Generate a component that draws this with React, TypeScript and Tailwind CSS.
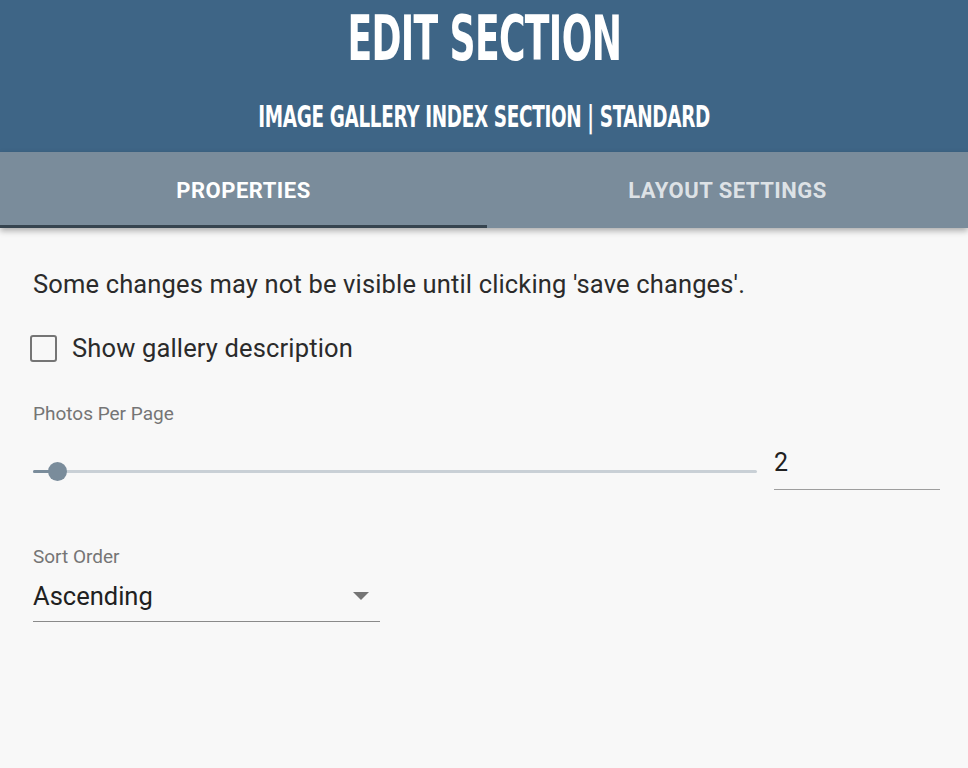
import { useState } from "react";

const condensed = { fontFamily: "'DejaVu Sans Condensed', 'DejaVu Sans', sans-serif" };

export default function App() {
  const [tab, setTab] = useState(0);
  const [checked, setChecked] = useState(false);
  const [perPage, setPerPage] = useState(2);
  const pct = ((perPage - 1) / 29) * 100;

  return (
    <div className="min-h-[768px] w-full bg-[#f8f8f8]" style={{ fontFamily: "Roboto, 'Liberation Sans', sans-serif" }}>
      {/* Header */}
      <div className="flex h-[152px] flex-col items-center bg-[#3e6586] text-white">
        <h1 className="mt-[5px] text-[62px] font-bold leading-[68px] tracking-[-1px] scale-x-[0.648]" style={condensed}>
          EDIT SECTION
        </h1>
        <h2 className="mt-[27px] text-[30px] font-bold leading-[34px] tracking-[-0.5px] scale-x-[0.682]" style={condensed}>
          IMAGE GALLERY INDEX SECTION | STANDARD
        </h2>
      </div>

      {/* Tabs */}
      <div className="relative flex h-[76px] bg-[#7a8c9b] shadow-[0_3px_6px_rgba(0,0,0,0.3)]">
        {["PROPERTIES", "LAYOUT SETTINGS"].map((t, i) => (
          <button
            key={t}
            onClick={() => setTab(i)}
            className={`relative flex items-center justify-center text-[22px] font-bold tracking-[0.5px] ${
              i === 0 ? "w-[487px]" : "flex-1"
            } ${tab === i ? "text-white" : "text-white/75"}`}
          >
            {t}
            {tab === i && <span className="absolute bottom-0 left-0 h-[3px] w-full bg-[#36444f]" />}
          </button>
        ))}
      </div>

      {/* Content */}
      <div className="pl-[33px] pr-[28px] pt-[41px] text-[#2b2b2b]">
        <p className="text-[25.5px] leading-[30px] tracking-[0.15px]">
          Some changes may not be visible until clicking 'save changes'.
        </p>

        <label className="mt-[34px] flex h-[30px] cursor-pointer items-center gap-[15px]">
          <span
            onClick={() => setChecked(!checked)}
            className={`-ml-[3px] flex h-[27px] w-[27px] items-center justify-center rounded-[3px] border-2 ${
              checked ? "border-[#7a8c9b] bg-[#7a8c9b]" : "border-[#757575]"
            }`}
          >
            {checked && (
              <svg viewBox="0 0 24 24" className="h-5 w-5" fill="none" stroke="white" strokeWidth="3">
                <path d="M5 12l5 5L20 7" />
              </svg>
            )}
          </span>
          <span className="text-[25.5px] leading-[30px] tracking-[0.15px]">Show gallery description</span>
        </label>

        <div className="mt-[41px] text-[19px] leading-[20px] text-[#757575]">Photos Per Page</div>
        <div className="mt-[26px] flex items-start gap-[17px]">
          <div className="relative h-[40px] flex-1">
            <div className="absolute left-0 right-0 top-[20px] h-[3px] rounded bg-[#c9d0d6]" />
            <div className="absolute left-0 top-[20px] h-[3px] rounded bg-[#7a8c9b]" style={{ width: `${pct}%` }} />
            <div
              className="absolute top-[12px] h-[19px] w-[19px] rounded-full bg-[#7a8c9b]"
              style={{ left: `calc(${pct}% - 9.5px)` }}
            />
          </div>
          <input
            type="number"
            value={perPage}
            onChange={(e) => setPerPage(Math.max(1, Math.min(30, Number(e.target.value) || 1)))}
            className="h-[40px] w-[166px] border-b border-[#9e9e9e] bg-transparent pb-[15px] text-[25px] text-[#212121] outline-none [appearance:textfield] [&::-webkit-inner-spin-button]:appearance-none"
          />
        </div>

        <div className="mt-[57px] text-[19px] leading-[20px] text-[#757575]">Sort Order</div>
        <div className="mt-[13px] flex w-[347px] items-center justify-between border-b border-[#8a8a8a] pb-[9px]">
          <span className="text-[25.5px] leading-[32px] text-[#212121]">Ascending</span>
          <svg viewBox="0 0 16 8" className="mr-[11px] h-[8px] w-[16px]">
            <path d="M0 0h16L8 8z" fill="#757575" />
          </svg>
        </div>
      </div>
    </div>
  );
}
